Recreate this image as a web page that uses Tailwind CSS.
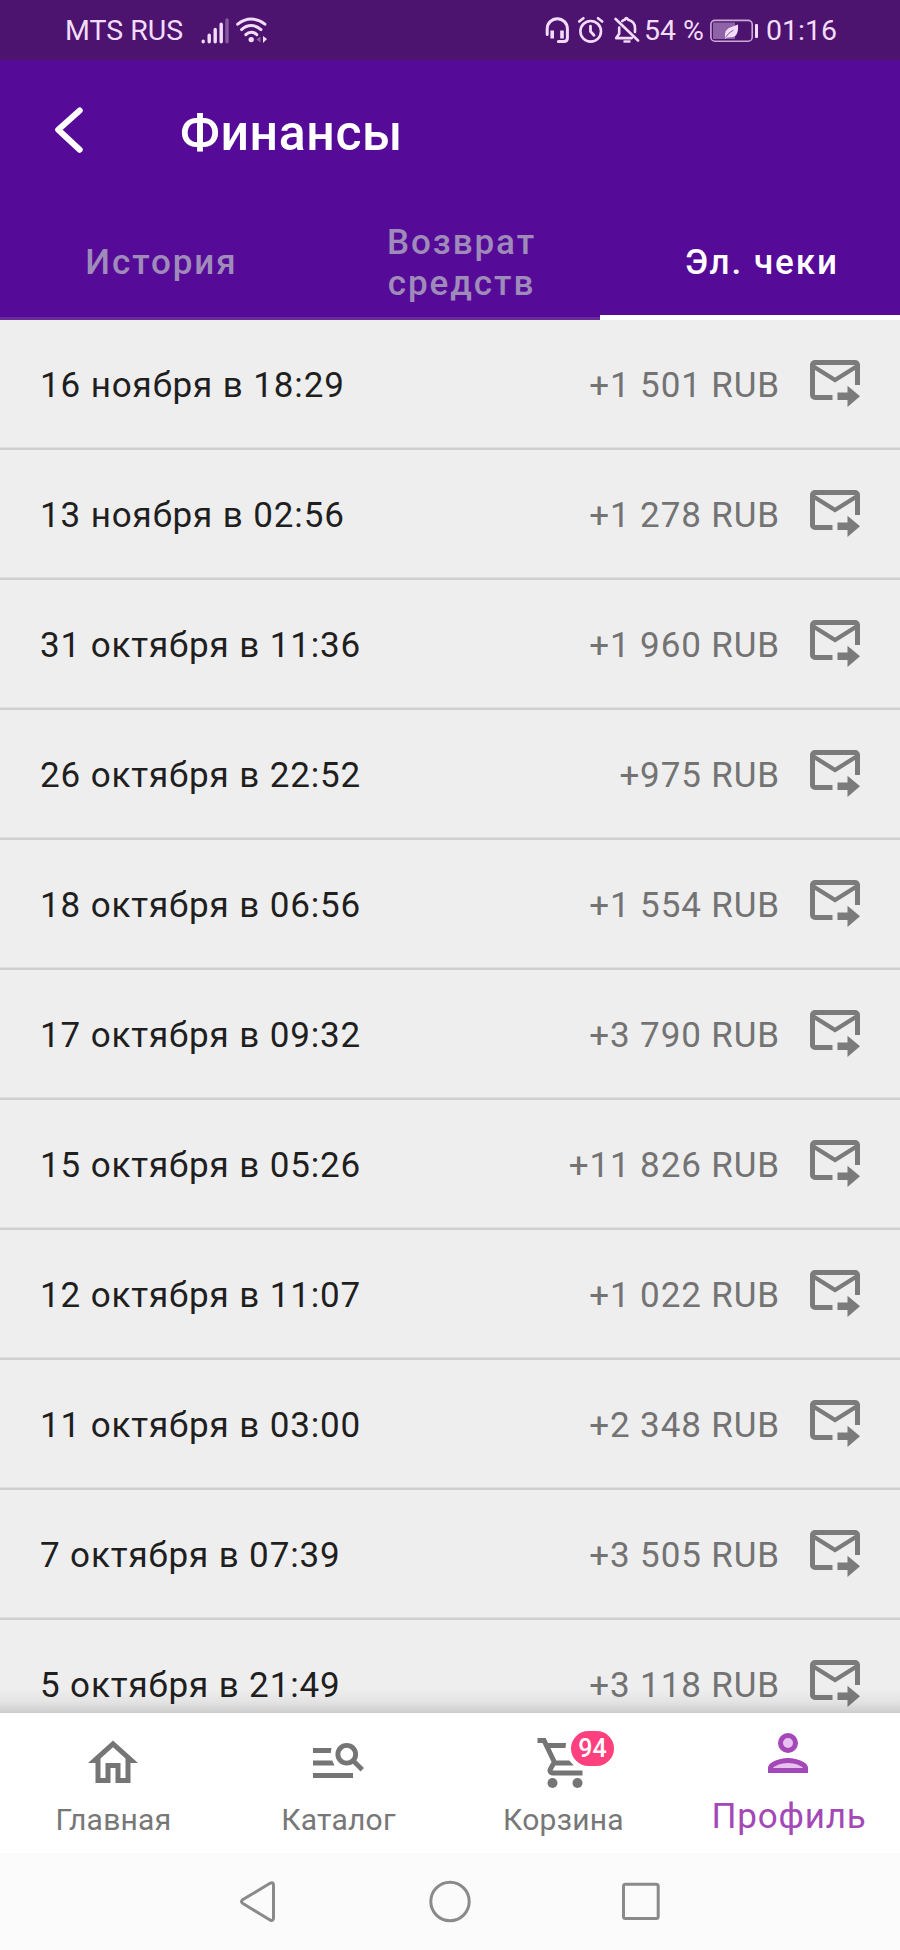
<!DOCTYPE html>
<html lang="ru">
<head>
<meta charset="utf-8">
<title>Финансы</title>
<script src="https://cdn.jsdelivr.net/npm/@tailwindcss/browser@4"></script>
</head>
<body class="w-[900px] h-[1950px] overflow-hidden bg-[#eeeeee] font-[Roboto,sans-serif] flex flex-col">

<!-- Status bar -->
<div class="h-[60px] shrink-0 bg-[#4c146e] text-[#f3dcfa] flex items-start text-[28.5px] leading-[34px] pt-[14px] pl-[65px]">
  <span class="w-[136px] whitespace-nowrap">MTS RUS</span>
  <svg class="w-[28px] h-[27px] mt-[2.5px]" viewBox="0 0 28 27" fill="none" stroke="currentColor" stroke-width="3.4" stroke-linecap="round">
    <path d="M2.2 24.3v.4M8.2 18.2v6.5M14.2 12.5v12.2M20.2 7.3v17.4"/><path opacity=".35" d="M26 3v21.7"/>
  </svg>
  <svg class="w-[34px] h-[28px] ml-[6px] mt-[2px]" viewBox="0 0 34 28" fill="none" stroke="currentColor" stroke-width="3" stroke-linecap="round">
    <path d="M2.7 8.2Q9 3 16.3 3t13.6 5.2M6.6 13.6q4.4-4 9.7-4t9.7 4M10.8 18.6q2.4-2.4 5.5-2.4t5.5 2.4"/>
    <circle cx="16.2" cy="23.6" r="2.7" fill="currentColor" stroke="none"/>
    <path d="M28 20l4 3-4 4z" fill="currentColor" stroke="none"/><path opacity=".4" d="M25.5 20.500l-4 3 4 3z" fill="currentColor" stroke="none"/>
  </svg>
  <svg class="w-[26px] h-[28px] ml-[275px] mt-[2px]" viewBox="0 0 26 28" fill="none" stroke="currentColor" stroke-width="3" stroke-linecap="round">
    <path d="M3.200 18.500V12.800a10.100 10.100 0 0 1 20.200 0V22q0 3.500-3.500 3.500h-5.500"/><path stroke-width="3.600" stroke-linecap="butt" d="M8.200 14.500v8M18 14.500v8"/>
  </svg>
  <svg class="w-[28px] h-[28px] ml-[7px] mt-[2px]" viewBox="0 0 28 28" fill="none" stroke="currentColor" stroke-width="2.600" stroke-linecap="round">
    <circle cx="13.700" cy="15.300" r="10.300"/><path d="M2.200 5.500l4.200-3.300M25.200 5.500L21 2.200"/><path stroke-width="2.800" d="M13.500 10.200v5.300l3.500 3.800"/>
  </svg>
  <svg class="w-[26px] h-[28px] ml-[9px] mt-[2px]" viewBox="0 0 26 28" fill="none" stroke="currentColor" stroke-width="2.600" stroke-linecap="round" stroke-linejoin="round">
    <path d="M1.600 3L24 24.500M5.200 11.500v6.200l-3 4.400h15.500"/><path d="M8.200 5.200q1.200-1.200 2.600-1.400 1.100-3.400 3.400 0Q21 5.800 21 12v4"/><path stroke-linecap="butt" stroke-width="2.400" d="M9.500 25.500h7"/>
  </svg>
  <span class="ml-[4px] w-[66px] whitespace-nowrap">54 %</span>
  <svg class="w-[49px] h-[24px] mt-[4.500px]" viewBox="0 0 49 24">
    <rect x=".9" y="1.400" width="41.300" height="20.800" rx="4" fill="none" stroke="currentColor" stroke-opacity=".75" stroke-width="1.600"/>
    <path d="M3 3.500h22v16.500H3z" fill="currentColor" opacity=".4"/>
    <path d="M28 5.500q1 13.300-7.500 12.800-1.800 0-3 .2l-2.500 1.200q-1.500-10 7-12z" fill="currentColor"/><path d="M15.500 18.500q3-5 8-7.500" stroke="#8a5da3" fill="none"/>
    <rect x="45" y="5" width="3" height="14" rx="1" fill="currentColor"/>
  </svg>
  <span class="ml-[7px] whitespace-nowrap">01:16</span>
</div>

<!-- App bar and tabs -->
<header class="h-[260px] shrink-0 bg-[#560b98] text-white flex flex-col">
  <div class="h-[144px] flex items-start">
    <svg class="w-[32px] h-[50px] ml-[53px] mt-[45px]" viewBox="0 0 32 50" fill="none" stroke="currentColor" stroke-width="6" stroke-linecap="round" stroke-linejoin="round"><path d="M26.700 5.500L5.200 24.800 26.700 44.700"/></svg>
    <h1 class="ml-[95px] mt-[43px] text-[50px] leading-[60px] font-medium tracking-[0.6px]">Финансы</h1>
  </div>
  <nav class="h-[116px] grid grid-cols-3 text-[35px] leading-[41px] font-medium tracking-[1.95px] text-center text-[#9f8bba]">
    <div class="flex items-center justify-center pl-[23px] pt-[4px] border-b-[3px] border-[#6a2c97]">История</div>
    <div class="flex items-center justify-center pl-[23px] pt-[4px] border-b-[3px] border-[#6a2c97]">Возврат<br>средств</div>
    <div class="flex items-center justify-center pl-[24px] pt-[6px] border-b-[5px] border-white text-white">Эл. чеки</div>
  </nav>
</header>

<!-- Receipts -->
<main id="list" class="relative h-[1393px] shrink-0 overflow-hidden bg-[#eeeeee]">
  <div class="absolute inset-x-0 bottom-0 h-[24px] z-10 bg-linear-to-b from-black/0 via-black/[0.04] to-black/[0.14]"></div>
</main>
<template id="row">
  <div class="h-[130px] flex flex-col">
    <div class="h-[127px] flex items-start pl-[40px] pr-[35px] text-[35px] leading-[42px] tracking-[0.875px]">
      <span data-date class="mt-[45px] text-[#1f1f1f] whitespace-nowrap"></span>
      <span data-sum class="mt-[45px] ml-auto text-[#737373] whitespace-nowrap"></span>
      <svg class="w-[60px] h-[60px] ml-[25px] mt-[30px]" viewBox="0 0 24 24" fill="#7b7b7b"><path d="M13 17h4v-2.750l5 4.250-5 4.250V20h-4v-3M20 4H4a2 2 0 0 0-2 2v12a2 2 0 0 0 2 2h7v-2H4V8l8 5 8-5v6h2V6a2 2 0 0 0-2-2m-8 7L4 6h16l-8 5z"/></svg>
    </div>
    <div class="h-px bg-[#dfdfdf]"></div>
    <div class="h-[2px] bg-[#cfcfcf]"></div>
  </div>
</template>

<!-- Bottom navigation -->
<nav class="h-[140px] shrink-0 bg-white grid grid-cols-4 text-[30px] leading-[36px] tracking-[0.25px] text-[#777777]">
  <div class="flex flex-col items-center pt-[20px]">
    <svg class="w-[60px] h-[60px]" viewBox="0 0 24 24" fill="#757575"><path d="M12 5.690l5 4.500V18h-2v-6H9v6H7v-7.810l5-4.500M12 3L2 12h3v8h6v-6h2v6h6v-8h3"/></svg>
    <span class="mt-[9px] pl-[2px]">Главная</span>
  </div>
  <div class="flex flex-col items-center pt-[20px]">
    <svg class="w-[60px] h-[60px]" viewBox="0 0 24 24" fill="#757575"><path d="M2 6h7.400l-.3 2H2zM2 11h7.700l.9 2H2zM2 16h16v2H2z"/><g fill="none" stroke="#757575"><circle cx="15.500" cy="8.500" r="3.550" stroke-width="1.950"/><path stroke-width="1.900" d="M18 11l3.700 3.700"/></g></svg>
    <span class="mt-[9px] pl-[2px]">Каталог</span>
  </div>
  <div class="relative flex flex-col items-center pt-[20px]">
    <svg class="w-[60px] h-[60px] ml-[5px]" viewBox="0 0 24 24" fill="#757575"><path d="M1 2h3.270l.94 2h7.200l-.2 2H6.150l2.370 5h5.200l1.800 2H8.100L7 15h12v2H7a2 2 0 0 1-1.730-3l1.350-2.450L3 4H1z"/><circle cx="7" cy="20" r="2"/><circle cx="17" cy="20" r="2"/></svg>
    <span class="mt-[9px] pl-[2px]">Корзина</span>
    <div class="absolute left-[121px] top-[17.500px] w-[43px] h-[35px] rounded-full bg-[#fe417e] text-white text-[25px] leading-[35px] font-medium tracking-normal text-center">94</div>
  </div>
  <div class="flex flex-col items-center pt-[10px] text-[#a348b6]">
    <svg class="w-[60px] h-[60px]" viewBox="0 0 24 24"><circle cx="12" cy="8" r="3" fill="#e9c1f0" stroke="#a348b6" stroke-width="2"/><path d="M12 14c-2.670 0-8 1.340-8 4v2h16v-2c0-2.660-5.330-4-8-4z" fill="#a348b6"/><path d="M6 18c.2-.7 3.300-2 6-2s5.800 1.300 6 2z" fill="#e9c1f0"/></svg>
    <span class="mt-[13px] pl-[3px] text-[35px] leading-[42px] tracking-[0.8px]">Профиль</span>
  </div>
</nav>

<!-- System navigation -->
<div class="h-[97px] shrink-0 bg-[#fbfbfb] flex items-start pt-[26px] pl-[236px]">
  <svg class="w-[44px] h-[44px]" viewBox="0 0 44 44" fill="none" stroke="#8a8a8a" stroke-width="3" stroke-linejoin="round"><path d="M6.500 20.800Q4.500 22.500 6.500 24.200L34 41Q37.500 42.500 37.500 39V6Q37.500 2.500 34 4.300z"/></svg>
  <svg class="w-[44px] h-[44px] ml-[148px]" viewBox="0 0 44 44" fill="none" stroke="#8a8a8a" stroke-width="3"><circle cx="22" cy="22.500" r="19.200"/></svg>
  <svg class="w-[44px] h-[44px] ml-[147px]" viewBox="0 0 44 44" fill="none" stroke="#8a8a8a" stroke-width="3"><rect x="4.500" y="5.300" width="34.700" height="34.200" rx="2"/></svg>
</div>

<script>
const receipts = [
  ['16 ноября в 18:29', '+1 501 RUB'],
  ['13 ноября в 02:56', '+1 278 RUB'],
  ['31 октября в 11:36', '+1 960 RUB'],
  ['26 октября в 22:52', '+975 RUB'],
  ['18 октября в 06:56', '+1 554 RUB'],
  ['17 октября в 09:32', '+3 790 RUB'],
  ['15 октября в 05:26', '+11 826 RUB'],
  ['12 октября в 11:07', '+1 022 RUB'],
  ['11 октября в 03:00', '+2 348 RUB'],
  ['7 октября в 07:39', '+3 505 RUB'],
  ['5 октября в 21:49', '+3 118 RUB'],
];
const list = document.getElementById('list');
const row = document.getElementById('row');
for (const [date, sum] of receipts) {
  const el = row.content.cloneNode(true);
  el.querySelector('[data-date]').textContent = date;
  el.querySelector('[data-sum]').textContent = sum;
  list.append(el);
}
</script>
</body>
</html>
